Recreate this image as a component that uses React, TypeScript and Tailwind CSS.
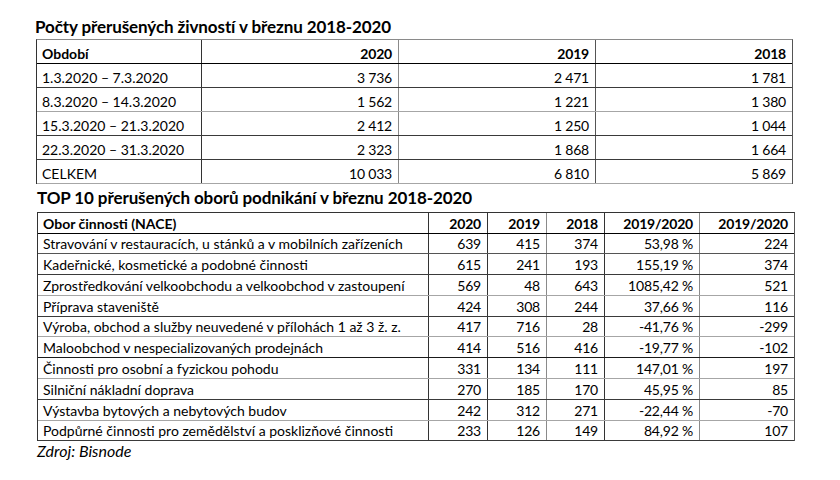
const font = { fontFamily: 'Lato, "Open Sans", sans-serif' }

type Row = { cells: string[]; line: string; h: string }

const t1Cols = [
  { w: "w-[165px]", b: "border-r border-r-[#333333]", align: "justify-start" },
  { w: "w-[197px]", b: "border-r border-r-[#8a8a8a]", align: "justify-end" },
  { w: "w-[197px]", b: "border-r border-r-[#555555]", align: "justify-end" },
  { w: "w-[196px]", b: "", align: "justify-end" },
]

const t1Rows: Row[] = [
  { cells: ["Období", "2020", "2019", "2018"], line: "border-b-[#000000]", h: "h-[24px]" },
  { cells: ["1.3.2020 – 7.3.2020", "3\u00a0736", "2\u00a0471", "1\u00a0781"], line: "border-b-[#3a3a3a]", h: "h-[24px]" },
  { cells: ["8.3.2020 – 14.3.2020", "1\u00a0562", "1\u00a0221", "1\u00a0380"], line: "border-b-[#a6a6a6]", h: "h-[24px]" },
  { cells: ["15.3.2020 – 21.3.2020", "2\u00a0412", "1\u00a0250", "1\u00a0044"], line: "border-b-[#3a3a3a]", h: "h-[24px]" },
  { cells: ["22.3.2020 – 31.3.2020", "2\u00a0323", "1\u00a0868", "1\u00a0664"], line: "border-b-[#3a3a3a]", h: "h-[24px]" },
  { cells: ["CELKEM", "10\u00a0033", "6\u00a0810", "5\u00a0869"], line: "border-b-[#a6a6a6]", h: "h-[24px]" },
]

const t2Cols = [
  { w: "w-[391px]", b: "border-r border-r-[#333333]", align: "justify-start" },
  { w: "w-[59px]", b: "border-r border-r-[#333333]", align: "justify-end" },
  { w: "w-[59px]", b: "border-r border-r-[#8a8a8a]", align: "justify-end" },
  { w: "w-[58px]", b: "border-r border-r-[#333333]", align: "justify-end" },
  { w: "w-[95px]", b: "border-r border-r-[#8a8a8a]", align: "justify-end" },
  { w: "w-[94px]", b: "", align: "justify-end" },
]

const t2Rows: Row[] = [
  { cells: ["Obor činnosti (NACE)", "2020", "2019", "2018", "2019/2020", "2019/2020"], line: "border-b-[#000000]", h: "h-[21px]" },
  { cells: ["Stravování v restauracích, u stánků a v mobilních zařízeních", "639", "415", "374", "53,98\u00a0%", "224"], line: "border-b-[#555555]", h: "h-[20px]" },
  { cells: ["Kadeřnické, kosmetické a podobné činnosti", "615", "241", "193", "155,19\u00a0%", "374"], line: "border-b-[#3a3a3a]", h: "h-[21px]" },
  { cells: ["Zprostředkování velkoobchodu a velkoobchod v zastoupení", "569", "48", "643", "1085,42\u00a0%", "521"], line: "border-b-[#a6a6a6]", h: "h-[21px]" },
  { cells: ["Příprava staveniště", "424", "308", "244", "37,66\u00a0%", "116"], line: "border-b-[#3a3a3a]", h: "h-[21px]" },
  { cells: ["Výroba, obchod a služby neuvedené v přílohách 1 až 3 ž. z.", "417", "716", "28", "-41,76\u00a0%", "-299"], line: "border-b-[#a6a6a6]", h: "h-[20px]" },
  { cells: ["Maloobchod v nespecializovaných prodejnách", "414", "516", "416", "-19,77\u00a0%", "-102"], line: "border-b-[#1a1a1a]", h: "h-[21px]" },
  { cells: ["Činnosti pro osobní a fyzickou pohodu", "331", "134", "111", "147,01\u00a0%", "197"], line: "border-b-[#a6a6a6]", h: "h-[21px]" },
  { cells: ["Silniční nákladní doprava", "270", "185", "170", "45,95\u00a0%", "85"], line: "border-b-[#3a3a3a]", h: "h-[21px]" },
  { cells: ["Výstavba bytových a nebytových budov", "242", "312", "271", "-22,44\u00a0%", "-70"], line: "border-b-[#a6a6a6]", h: "h-[21px]" },
  { cells: ["Podpůrné činnosti pro zemědělství a posklizňové činnosti", "233", "126", "149", "84,92\u00a0%", "107"], line: "border-b-[#3a3a3a]", h: "h-[20px]" },
]

function Table({ cols, rows, top }: { cols: typeof t1Cols; rows: Row[]; top: string }) {
  return (
    <div className={`flex flex-col border-t border-l border-r ${top} border-l-[#333333] border-r-[#555555] w-fit`}>
      {rows.map((row, i) => (
        <div key={i} className={`flex border-b ${row.line} ${row.h}`}>
          {row.cells.map((c, j) => (
            <div
              key={j}
              className={`flex items-end ${cols[j].w} ${cols[j].b} ${cols[j].align} pl-[5px] pr-[6px] pb-[1px] whitespace-nowrap ${i === 0 ? "font-bold" : ""}`}
            >
              <span className={`text-[14px] leading-[17px] text-black ${j === 0 ? "tracking-[0px]" : "tracking-[-0.2px]"}`}>{c}</span>
            </div>
          ))}
        </div>
      ))}
    </div>
  )
}

export default function App() {
  return (
    <div className="min-h-screen w-[840px] h-[480px] bg-white pl-[36px] pt-[16px]" style={font}>
      <div className="h-[22px] leading-[22px] text-[17px] font-bold tracking-[-0.1px] text-black -ml-[1px] mb-[1px]">
        Počty přerušených živností v březnu 2018-2020
      </div>
      <Table cols={t1Cols} rows={t1Rows} top="border-t-[#8a8a8a]" />
      <div className="mt-[3px] mb-[3px] ml-[1px] h-[22px] leading-[22px] text-[17px] font-bold tracking-[-0.1px] text-black">
        TOP 10 přerušených oborů podnikání v březnu 2018-2020
      </div>
      <div className="ml-[1px]">
        <Table cols={t2Cols} rows={t2Rows} top="border-t-[#333333]" />
      </div>
      <div className="mt-[1px] ml-[1px] h-[18px] leading-[18px] text-[16px] italic text-black">
        Zdroj: Bisnode
      </div>
    </div>
  )
}
